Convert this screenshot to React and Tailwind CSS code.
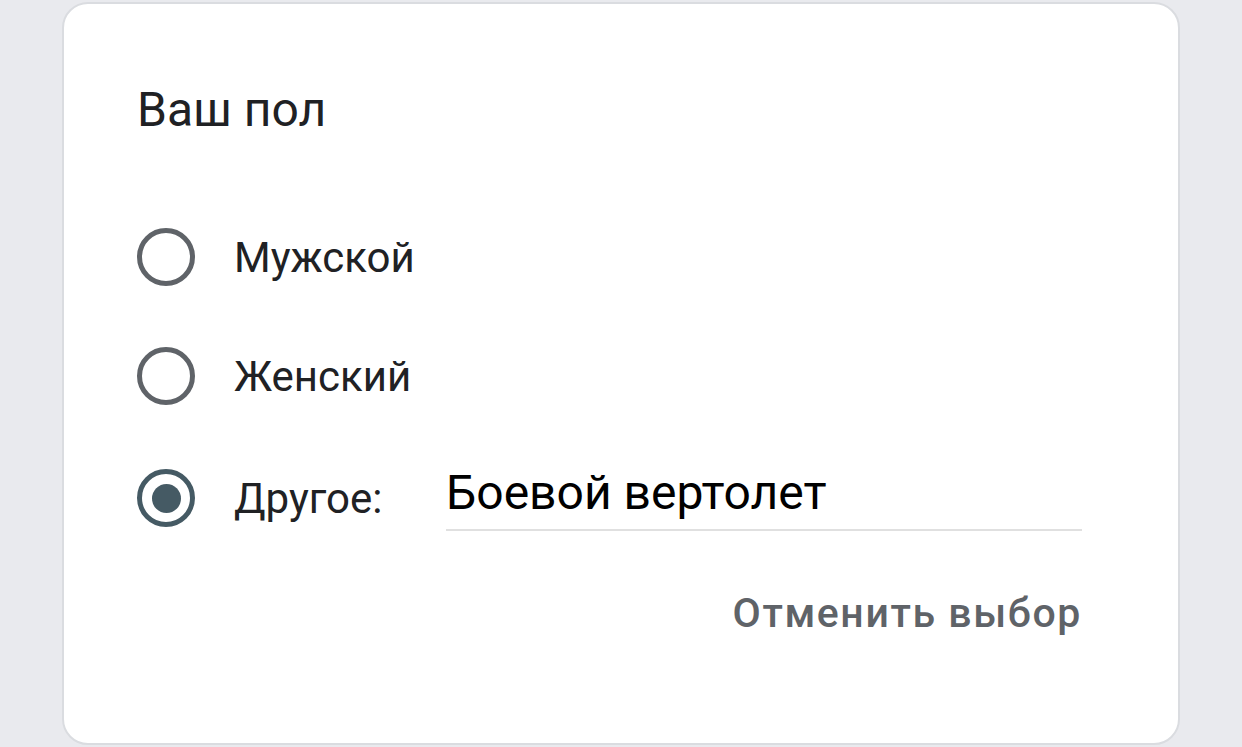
import React, { useState } from "react";

const options = [
  { id: "male", label: "Мужской" },
  { id: "female", label: "Женский" },
];

function Radio({ checked }) {
  return (
    <div
      className={
        "w-[58px] h-[58px] shrink-0 rounded-full border-[5px] flex items-center justify-center " +
        (checked ? "border-[#455a64]" : "border-[#5f6368]")
      }
    >
      {checked && <div className="w-[29px] h-[29px] rounded-full bg-[#455a64]" />}
    </div>
  );
}

export default function App() {
  const [value, setValue] = useState("other");
  const [other, setOther] = useState("Боевой вертолет");

  return (
    <div className="w-[1242px] h-[747px] bg-[#e9eaee] pt-[2px] pl-[62px] overflow-hidden">
      <div
        className="w-[1118px] h-[743px] bg-white border-2 border-[#dadce0] rounded-[26px] pl-[73px] pr-[96px] pt-[78px]"
        style={{ fontFamily: "Roboto, 'Noto Sans', sans-serif" }}
      >
        <h1 className="text-[48px] leading-[56px] text-[#202124]">Ваш пол</h1>

        <div className="mt-[90px] flex flex-col gap-[61px]">
          {options.map((o) => (
            <label
              key={o.id}
              className="flex items-center h-[58px] cursor-pointer"
              onClick={() => setValue(o.id)}
            >
              <Radio checked={value === o.id} />
              <span className="ml-[39px] text-[42px] text-[#202124]">{o.label}</span>
            </label>
          ))}
          <div className="flex items-center h-[58px] mt-[3px]">
            <div onClick={() => setValue("other")} className="cursor-pointer">
              <Radio checked={value === "other"} />
            </div>
            <span className="ml-[39px] w-[212px] shrink-0 text-[42px] text-[#202124]">Другое:</span>
            <div className="flex-1">
              <input
                value={other}
                onChange={(e) => setOther(e.target.value)}
                className="w-full bg-transparent outline-none text-[48px] leading-[56px] text-black border-b-2 border-[#e0e0e0] pb-[8px]"
              />
            </div>
          </div>
        </div>

        <div className="mt-[58px] flex justify-end">
          <button className="text-[41px] leading-[56px] font-medium tracking-[1.6px] text-[#5f6368]">
            Отменить выбор
          </button>
        </div>
      </div>
    </div>
  );
}
